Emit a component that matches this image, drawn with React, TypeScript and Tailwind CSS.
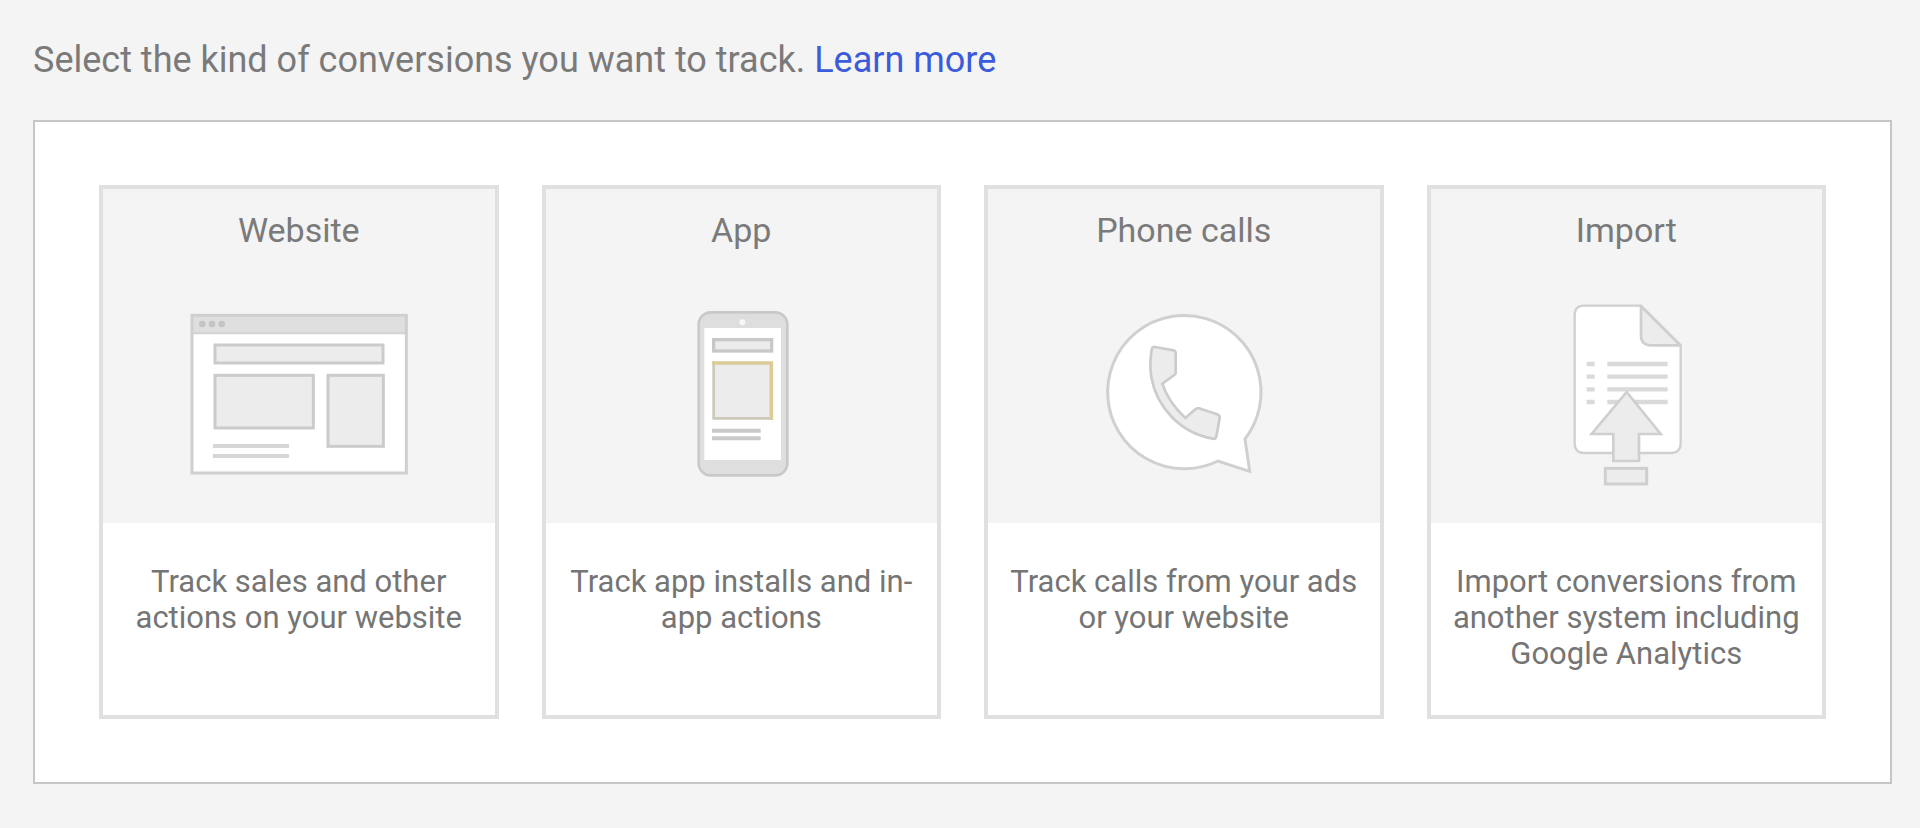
import type { ReactNode } from "react";

function WebsiteIcon() {
  return (
    <svg viewBox="-2 0 780 630" className="h-[210px] w-[260px]" aria-hidden="true">
      <rect x="67" y="76" width="643" height="473" fill="#ffffff" />
      <rect x="67" y="76" width="643" height="54" fill="#dfdfdf" />
      <path d="M67 130H710" stroke="#d2d2d2" strokeWidth="6" />
      <rect x="67" y="76" width="643" height="473" fill="none" stroke="#cfcfcf" strokeWidth="9" />
      <g fill="#c4c4c4">
        <circle cx="98" cy="102" r="10" />
        <circle cx="127" cy="102" r="10" />
        <circle cx="156" cy="102" r="10" />
      </g>
      <g fill="#ececec" stroke="#cbcbcb" strokeWidth="9">
        <rect x="136" y="165" width="504" height="54" />
        <rect x="136" y="256" width="295" height="158" />
        <rect x="475" y="256" width="166" height="213" />
      </g>
      <path d="M130 468H358M130 498H358" stroke="#d6d6d6" strokeWidth="12" />
    </svg>
  );
}

function AppIcon() {
  return (
    <svg viewBox="-7 0 444 630" className="h-[210px] w-[148px]" aria-hidden="true">
      <rect x="88" y="67" width="266" height="489" rx="36" fill="#dedede" stroke="#c9c9c9" strokeWidth="8" />
      <rect x="105" y="114" width="230" height="396" fill="#ffffff" />
      <circle cx="219" cy="97" r="9" fill="#f8f8f8" />
      <rect x="133" y="149" width="174" height="34" fill="#ececec" stroke="#c8c8c8" strokeWidth="10" />
      <rect x="133" y="218" width="174" height="167" fill="#ececec" />
      <path d="M133 213V385H302" fill="none" stroke="#ccc8bc" strokeWidth="8" />
      <path d="M128 219H306V390" fill="none" stroke="#dccb97" strokeWidth="11" />
      <path d="M128 422H274M128 445H274" stroke="#c9c9c9" strokeWidth="12" />
    </svg>
  );
}

function PhoneCallIcon() {
  return (
    <svg viewBox="-3 0 570 630" className="h-[210px] w-[190px]" aria-hidden="true">
      <path
        d="M384 513A230 230 0 1 1 465 447L479 544Z"
        fill="#ffffff"
        stroke="#d0d0d0"
        strokeWidth="9"
        strokeLinejoin="miter"
      />
      <path
        d="M196 171L250 181Q257 183 257 190V248Q257 252 253 255L217 281C229 319 255 355 286 384L317 357Q321 354 327 355L381 373Q390 376 389 384L379 440Q377 448 368 446C270 428 200 352 184 262C179 232 181 204 185 179Q187 169 196 171Z"
        fill="#ececec"
        stroke="#cccccc"
        strokeWidth="8"
        strokeLinejoin="round"
      />
    </svg>
  );
}

function ImportIcon() {
  return (
    <svg viewBox="-9 0 480 630" className="h-[210px] w-[160px]" aria-hidden="true">
      <path
        d="M105 47H276L395 166V459Q395 489 365 489H105Q77 489 77 459V75Q77 47 105 47Z"
        fill="#ffffff"
        stroke="#d0d0d0"
        strokeWidth="7"
      />
      <path
        d="M276 49L394 166H306Q276 166 276 136Z"
        fill="#ececec"
        stroke="#cfcfcf"
        strokeWidth="8"
        strokeLinejoin="round"
      />
      <path
        d="M113 222H137M113 260H137M113 298H137M113 336H137M175 222H356M175 260H356M175 298H356M175 336H356"
        stroke="#dadada"
        strokeWidth="13"
      />
      <path d="M233 306L335 432H270V513H193V432H128Z" fill="#ececec" stroke="#cfcfcf" strokeWidth="8" />
      <rect x="169" y="535" width="124" height="47" fill="#ececec" stroke="#cfcfcf" strokeWidth="9" />
    </svg>
  );
}

type ConversionType = {
  title: string;
  description: string;
  icon: ReactNode;
};

const conversionTypes: ConversionType[] = [
  { title: "Website", description: "Track sales and other actions on your website", icon: <WebsiteIcon /> },
  { title: "App", description: "Track app installs and in-app actions", icon: <AppIcon /> },
  { title: "Phone calls", description: "Track calls from your ads or your website", icon: <PhoneCallIcon /> },
  {
    title: "Import",
    description: "Import conversions from another system including Google Analytics",
    icon: <ImportIcon />,
  },
];

function ConversionCard({ title, description, icon }: ConversionType) {
  return (
    <button type="button" className="flex cursor-pointer flex-col border-4 border-[#e0e0e0] bg-white text-center">
      <span className="flex w-full flex-col items-center gap-10 bg-[#f4f4f4] pt-[21px] pb-[23px]">
        <span className="text-[34px] leading-10 text-[#7a7a7a]">{title}</span>
        {icon}
      </span>
      <span className="block w-full px-4 pt-[41px] pb-[43px] text-[31px] leading-9 text-[#757575]">{description}</span>
    </button>
  );
}

export default function App() {
  return (
    <main className="min-h-screen bg-[#f4f4f4] px-7 pt-10 pb-11 pl-[33px] font-[Roboto,sans-serif]">
      <p className="text-[36px] leading-10 text-[#7a7a7a]">
        Select the kind of conversions you want to track.{" "}
        <a href="#learn-more" className="text-[#3b5bdb]">
          Learn more
        </a>
      </p>
      <section className="mt-10 grid grid-cols-4 gap-[43px] border-2 border-[#c6c6c6] bg-white px-16 py-[63px]">
        {conversionTypes.map((type) => (
          <ConversionCard key={type.title} {...type} />
        ))}
      </section>
    </main>
  );
}
